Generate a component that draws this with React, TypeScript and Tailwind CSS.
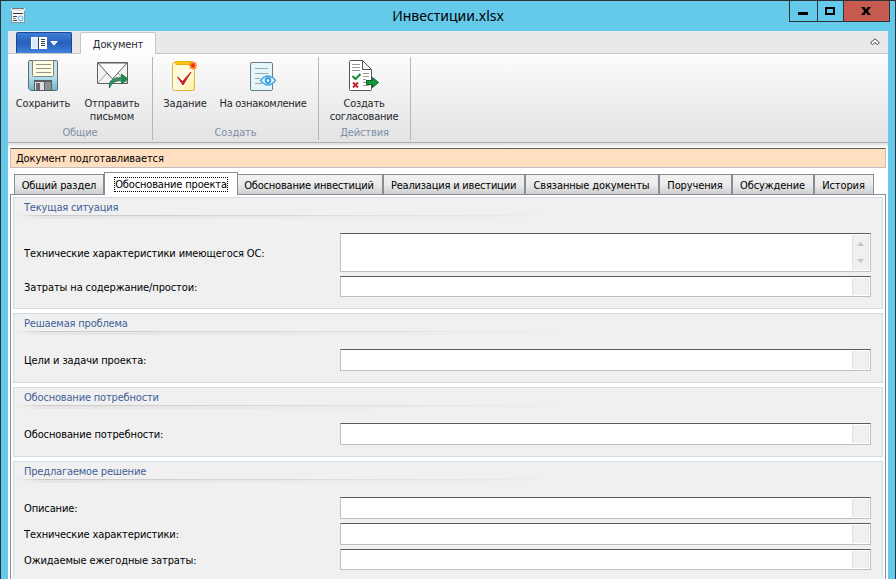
import { ReactNode } from 'react';
import clsx from 'clsx';

function FormIcon() {
  return (
    <svg width="15" height="17" viewBox="0 0 15 17" shapeRendering="crispEdges">
      <rect x="0.5" y="2.5" width="13" height="13" fill="#f4f8fa" stroke="#7d97a3" />
      <rect x="0" y="1" width="14" height="3" fill="#e4e4e4" />
      <rect x="1" y="1" width="12" height="1" fill="#777" />
      <rect x="2" y="6" width="10" height="1" fill="#333" />
      <rect x="2" y="9" width="4" height="1" fill="#444" />
      <rect x="2" y="11" width="3" height="1" fill="#888" />
      <rect x="2" y="13" width="4" height="1" fill="#444" />
      <circle cx="9.5" cy="11.5" r="2.5" fill="#d8efff" stroke="#5fb0e8" shapeRendering="auto" />
    </svg>
  );
}

function SaveIcon() {
  return (
    <svg width="32" height="32" viewBox="0 0 32 32">
      <defs>
        <linearGradient id="disk" x1="0" y1="0" x2="0" y2="1">
          <stop offset="0" stopColor="#c9dde3" />
          <stop offset=".5" stopColor="#bfe3ee" />
          <stop offset="1" stopColor="#6cb4d0" />
        </linearGradient>
      </defs>
      <path d="M2.500.5h27q1 0 1 1v28q0 1-1 1h-26l-2-2v-27q0-1 1-1z" fill="url(#disk)" stroke="#5f696f" />
      <path d="M5.500.5h21v15q0 1-1 1h-19q-1 0-1-1z" fill="#fffde0" stroke="#7e8686" />
      <path d="M9 4.500h15M9 8.500h15M9 12.500h15" stroke="#97958a" />
      <path d="M7 20h18v11H7z" fill="#5b5f64" />
      <path d="M8 22h9v8H8z" fill="#dedede" />
      <path d="M9 23h4v7H9z" fill="#6a6e72" />
      <path d="M18 22h6v8h-6z" fill="#8c9196" />
    </svg>
  );
}

function MailIcon() {
  return (
    <svg width="34" height="30" viewBox="0 0 34 30">
      <path d="M2.500 2.500h30v21h-30z" fill="#f3f3f3" stroke="#5f5f5f" />
      <path d="M3 23l9-10M32 23l-9-10" stroke="#999" fill="none" />
      <path d="M3 3l13.500 15q1 1 2 0L32 3z" fill="#fafafa" stroke="#5f5f5f" />
      <path d="M14.500 28c-1.500-7 3-10.500 12-10.500V14l6.500 5-6.500 5v-3.200c-6-.3-9.500 1.700-12 7.200z" fill="#3b8f66" stroke="#1d6a42" strokeWidth=".8" />
      <path d="M26.500 14l6.500 5-6.500 5z" fill="#1f8a4c" />
    </svg>
  );
}

function TaskIcon() {
  return (
    <svg width="28" height="32" viewBox="0 0 28 32">
      <defs>
        <linearGradient id="note" x1="0" y1="0" x2="1" y2="1">
          <stop offset="0" stopColor="#fff6c4" />
          <stop offset=".5" stopColor="#fffce4" />
          <stop offset="1" stopColor="#ffec95" />
        </linearGradient>
      </defs>
      <rect x="1.500" y="2.500" width="22" height="28" rx="2" fill="url(#note)" stroke="#d9b648" />
      <path d="M4.500 1.500h16v2q0 1-1 1h-14q-1 0-1-1z" fill="#ffc70a" stroke="#e9b010" />
      <path d="M6.500 17l5 4.500L20 12l-8 13z" fill="#c5202b" stroke="#c5202b" strokeLinejoin="round" />
      <path d="M22 1.500v8M18 5.500h8M19 2.500l6 6M25 2.500l-6 6" stroke="#ff7a1a" strokeWidth="1.700" />
      <circle cx="22" cy="5.500" r="2" fill="#ff2a00" />
    </svg>
  );
}

function ReviewIcon() {
  return (
    <svg width="28" height="32" viewBox="0 0 28 32">
      <rect x="1.500" y="2.500" width="22" height="28" rx="1.500" fill="#e4f6f9" stroke="#6d7c85" />
      <path d="M6 8.500h13M6 13.500h13M6 18.500h5M6 23.500h7" stroke="#9caab0" />
      <path d="M11.500 20.500q7.500-9 15 0q-7.500 9-15 0z" fill="#f8fdff" stroke="#42a5e4" strokeWidth="1.500" />
      <circle cx="19" cy="20.500" r="3.400" fill="#3aa0e6" />
      <circle cx="19" cy="20.500" r="1.300" fill="#eaf8ff" />
    </svg>
  );
}

function ApprovalIcon() {
  return (
    <svg width="32" height="32" viewBox="0 0 32 32">
      <path d="M2.500.500h12l9 9v20q0 1-1 1h-20q-1 0-1-1v-28q0-1 1-1z" fill="#fff" stroke="#555" />
      <path d="M14.500.500v9h9z" fill="#f2f2f2" stroke="#555" strokeLinejoin="round" />
      <path d="M4 4.500h8M4 7.500h8M4 10.500h8M15 13.500h6M15 16.500h6M15 19.500h3M15 22.500h3M15 25.500h6" stroke="#999" />
      <path d="M4.500 16l3 3 5-5" fill="none" stroke="#168a38" strokeWidth="2" />
      <path d="M5 22.500l5 5M10 22.500l-5 5" stroke="#bc2530" strokeWidth="2" />
      <path d="M18.500 20.500h6v-3l6 5-6 5v-3h-6z" fill="#16953a" stroke="#0a6425" />
    </svg>
  );
}

function RibbonButton({ icon, lines, className }: { icon: ReactNode; lines: string[]; className?: string }) {
  return (
    <button className={clsx('flex shrink-0 flex-col items-center leading-[13px] text-[#26282e]', className)}>
      <span className="mb-[5px] flex h-8 items-start justify-center">{icon}</span>
      {lines.map((line) => (
        <span key={line} className="whitespace-nowrap">{line}</span>
      ))}
    </button>
  );
}

function RibbonGroup({ title, className, children }: { title: string; className?: string; children: ReactNode }) {
  return (
    <div className={clsx('flex h-[83px] shrink-0 flex-col border-r border-[#b5b5b5]', className)}>
      <div className="flex h-[69px] items-start pt-[3px]">{children}</div>
      <div className="text-center leading-[14px] text-[#7f8fa6]">{title}</div>
    </div>
  );
}

const tabs = [
  { title: 'Общий раздел', className: 'w-[90px]' },
  { title: 'Обоснование проекта', className: 'w-[134px] tracking-[-0.16px]', active: true },
  { title: 'Обоснование инвестиций', className: 'w-[145px] border-l-0 pr-[2px] tracking-[-0.2px]' },
  { title: 'Реализация и ивестиции', className: 'w-[142px] pr-px tracking-[-0.2px]' },
  { title: 'Связанные документы', className: 'w-[134px] pr-px' },
  { title: 'Поручения', className: 'w-[73px] pr-px' },
  { title: 'Обсуждение', className: 'w-[82px] pr-px' },
  { title: 'История', className: 'w-[60px] pr-px' },
];

function Field({ label, className, tall }: { label: string; className: string; tall?: boolean }) {
  return (
    <div className={clsx('flex shrink-0 items-center', className)}>
      <label className="w-[316px] whitespace-nowrap pt-[2px] leading-[14px]">{label}</label>
      <div className="flex h-full w-[531px] justify-end border border-[#bfbfc3] border-t-[#5a5a5a] bg-white p-px">
        <div className="flex w-[17px] flex-col items-center justify-between border-x border-l-[#e2e2e2] border-r-[#e6e6e6] bg-[#f0f0f0] py-[7px]">
          {tall && (
            <>
              <svg width="7" height="4" viewBox="0 0 7 4"><path d="M3.500 0L7 4H0z" fill="#c6c6c6" /></svg>
              <svg width="7" height="4" viewBox="0 0 7 4"><path d="M0 0h7L3.500 4z" fill="#c6c6c6" /></svg>
            </>
          )}
        </div>
      </div>
    </div>
  );
}

function Group({ title, className, children }: { title: string; className: string; children: ReactNode }) {
  return (
    <section className={clsx('flex w-[870px] shrink-0 flex-col border border-[#d3dde6] bg-[#f0f0f0] pl-[10px]', className)}>
      <h2 className="h-[17px] whitespace-nowrap pt-[3px] leading-[14px] tracking-[-0.18px] text-[#3f6197]">{title}</h2>
      <div className="-ml-2 h-px w-[576px] shrink-0 bg-linear-to-r from-transparent via-[#c8c8c8] via-5% to-transparent" />
      <div className="-ml-2 h-[3px] w-[576px] shrink-0 bg-linear-to-r from-transparent via-[#e6e6e6] via-5% to-transparent" />
      {children}
    </section>
  );
}

export default function App() {
  return (
    <div className="flex h-[579px] w-[896px] flex-col overflow-hidden border-x border-t border-[#2c343a] bg-[#65c9ea] px-[7px] font-['DejaVu_Sans_Condensed','DejaVu_Sans',sans-serif] text-[11px] tracking-[-0.12px] text-black">
      {/* Title bar */}
      <header className="flex h-[30px] shrink-0 items-start justify-between">
        <div className="flex w-[106px] pl-[3px] pt-[6px]"><FormIcon /></div>
        <h1 className="ml-[-7px] pt-[4px] font-['Noto_Sans',sans-serif] text-[14px] leading-[22px] tracking-normal">Инвестиции.xlsx</h1>
        <div className="mr-[-2px] flex h-[21px] w-[101px] shrink-0 border border-t-0 border-[#2c343a]">
          <button className="flex w-7 items-center justify-center border-r border-[#2c343a] pt-1"><span className="h-[3px] w-[10px] bg-black" /></button>
          <button className="flex w-[26px] items-center justify-center border-r border-[#2c343a]"><span className="h-2 w-[10px] border-2 border-black" /></button>
          <button className="flex flex-1 items-center justify-center bg-[#c75b51]">
            <svg width="10" height="8" viewBox="0 0 10 8"><path d="M0 0h3.500L5 2.500 6.500 0H10L6.800 4 10 8H6.500L5 5.500 3.500 8H0l3.200-4z" /></svg>
          </button>
        </div>
      </header>

      <main className="flex min-h-0 flex-1 flex-col bg-white">
        {/* Ribbon tabs */}
        <div className="flex h-[23px] shrink-0 items-end border-b border-[#c6c6c6] bg-[#e9e9e9] pl-2">
          <button className="mr-2 flex h-[21px] w-14 items-center justify-center gap-[3px] rounded-t-[2px] border border-b-0 border-[#1d4696] bg-linear-to-b from-[#3f7fd6] via-[#2560bb] via-50% to-[#3f83dc]">
            <svg width="16" height="12" viewBox="0 0 16 12" shapeRendering="crispEdges">
              <path d="M0 0h16v12H0z" fill="#fff" />
              <path d="M1 1h6v10H1z" fill="#dbe9f9" />
              <path d="M7 0h1v12H7zM10 2h4v1h-4zM10 4h4v1h-4zM10 6h4v1h-4zM10 8h4v1h-4z" fill="#333e50" />
            </svg>
            <svg width="8" height="5" viewBox="0 0 8 5"><path d="M.8.5h6.400L4 4.200z" fill="#dce8f8" stroke="#fff" /></svg>
          </button>
          <div className="-mb-px h-[22px] w-[76px] rounded-t-[2px] border border-b-0 border-[#c6c6c6] bg-[#fdfdfd] pt-1 text-center leading-[15px] text-[#26282e]">Документ</div>
          <svg className="mb-[7px] ml-auto mr-2" width="10" height="8" viewBox="0 0 10 8">
            <path d="M5 .8L9.300 4.600 7.500 6.600 5 4.500 2.500 6.600.7 4.600z" fill="#fff" stroke="#444" />
          </svg>
        </div>

        {/* Ribbon */}
        <div className="flex h-[89px] shrink-0 items-start border-b border-[#b0b0b0] bg-linear-to-b from-[#fcfcfc] to-[#e3e3e3] pt-[3px]">
          <RibbonGroup title="Общие" className="w-[145px]">
            <RibbonButton className="ml-[3px] w-16" icon={<SaveIcon />} lines={['Сохранить']} />
            <RibbonButton className="ml-[5px] w-16" icon={<MailIcon />} lines={['Отправить', 'письмом']} />
          </RibbonGroup>
          <RibbonGroup title="Создать" className="w-[166px]">
            <RibbonButton className="ml-1 w-14" icon={<TaskIcon />} lines={['Задание']} />
            <RibbonButton className="ml-1 w-[92px] tracking-[-0.3px]" icon={<ReviewIcon />} lines={['На ознакомление']} />
          </RibbonGroup>
          <RibbonGroup title="Действия" className="w-[92px]">
            <RibbonButton className="ml-[2px] w-[86px] tracking-[-0.25px]" icon={<ApprovalIcon />} lines={['Создать', 'согласование']} />
          </RibbonGroup>
        </div>
        <div className="h-[5px] shrink-0 bg-linear-to-b from-[#dcdcdc] to-white" />

        {/* Document state */}
        <div className="mx-[2px] h-5 shrink-0 whitespace-nowrap border border-[#bfbfbf] border-t-[#606060] bg-[#ffdfbf] pl-[5px] leading-[19px]">Документ подготавливается</div>

        {/* Section tabs */}
        <nav className="z-10 -mb-px ml-[6px] mt-1 flex h-[23px] shrink-0 items-end">
          {tabs.map((tab) => (
            <button
              key={tab.title}
              className={clsx(
                'flex shrink-0 justify-center whitespace-nowrap border border-[#898c95]',
                tab.active
                  ? 'h-[23px] border-b-0 bg-white pt-[4px]'
                  : 'h-[21px] bg-linear-to-b from-[#f2f2f2] from-0% via-[#ebebeb] via-50% to-[#cfcfcf] pt-1',
                tab.className,
              )}
            >
              <span className={clsx('leading-[13px]', tab.active && 'h-[15px] border border-dotted border-black')}>{tab.title}</span>
            </button>
          ))}
        </nav>

        <div className="mx-[2px] flex min-h-0 flex-1 flex-col gap-1 border border-b-0 border-[#898c95] pl-[2px] pt-[2px]">
          <Group title="Текущая ситуация" className="h-[112px]">
            <Field label="Технические характеристики имеющегося ОС:" className="mt-[14px] h-[39px]" tall />
            <Field label="Затраты на содержание/простои:" className="mt-1 h-[21px]" />
          </Group>
          <Group title="Решаемая проблема" className="h-[70px]">
            <Field label="Цели и задачи проекта:" className="mt-[14px] h-[22px]" />
          </Group>
          <Group title="Обоснование потребности" className="h-[70px]">
            <Field label="Обоснование потребности:" className="mt-[14px] h-[22px]" />
          </Group>
          <Group title="Предлагаемое решение" className="h-[140px]">
            <Field label="Описание:" className="mt-[14px] h-[22px]" />
            <Field label="Технические характеристики:" className="mt-1 h-[22px]" />
            <Field label="Ожидаемые ежегодные затраты:" className="mt-1 h-[21px]" />
          </Group>
        </div>
      </main>
    </div>
  );
}
